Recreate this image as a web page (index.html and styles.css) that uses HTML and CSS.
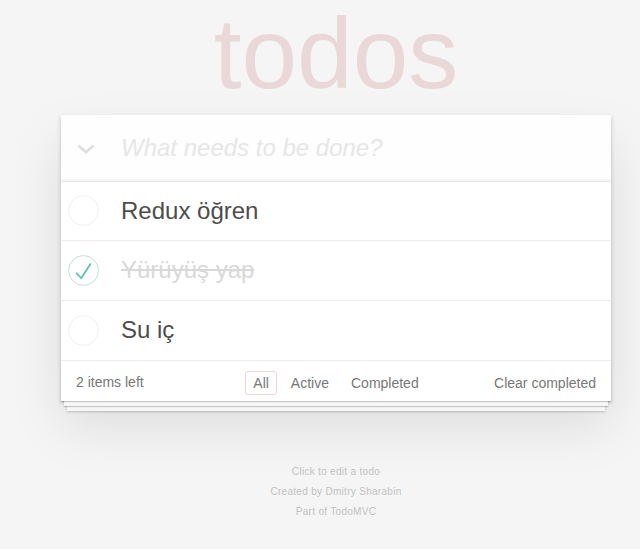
FILE: index.html
```html
<!DOCTYPE html>
<html lang="tr">
<head>
<meta charset="utf-8">
<title>Redux TodoMVC</title>
<link rel="stylesheet" href="styles.css">
</head>
<body>
<div class="page">
  <h1 class="title">todos</h1>
  <section class="todoapp">
    <header class="header">
      <span class="toggle-all">
        <svg width="18" height="10" viewBox="0 0 18 10"><polyline points="1.5,1.5 9,8.2 16.5,1.5" fill="none" stroke="#dedede" stroke-width="2.6"/></svg>
      </span>
      <input class="new-todo" type="text" placeholder="What needs to be done?">
    </header>
    <ul class="todo-list">
      <li class="todo">
        <svg class="toggle" width="31" height="31" viewBox="-2 -2 104 104"><circle cx="50" cy="50" r="50" fill="none" stroke="#ededed" stroke-width="3"/></svg>
        <label class="todo-label">Redux öğren</label>
      </li>
      <li class="todo completed">
        <svg class="toggle" width="31" height="31" viewBox="-2 -2 104 104"><circle cx="50" cy="50" r="50" fill="none" stroke="#bddad5" stroke-width="3"/><path fill="#5dc2af" d="M72 25L42 71 27 56l-4 4 20 20 34-52z"/></svg>
        <label class="todo-label">Yürüyüş yap</label>
      </li>
      <li class="todo">
        <svg class="toggle" width="31" height="31" viewBox="-2 -2 104 104"><circle cx="50" cy="50" r="50" fill="none" stroke="#ededed" stroke-width="3"/></svg>
        <label class="todo-label">Su iç</label>
      </li>
    </ul>
    <footer class="footer">
      <span class="todo-count">2 items left</span>
      <ul class="filters">
        <li><a class="filter selected">All</a></li>
        <li><a class="filter">Active</a></li>
        <li><a class="filter">Completed</a></li>
      </ul>
      <span class="clear-completed">Clear completed</span>
    </footer>
  </section>
  <footer class="info">
    <p>Click to edit a todo</p>
    <p>Created by Dmitry Sharabin</p>
    <p>Part of TodoMVC</p>
  </footer>
</div>
</body>
</html>
```

FILE: styles.css
```css
html, body {
  margin: 0;
  padding: 0;
}

body {
  background: #f5f5f5;
  color: #4d4d4d;
  font: 14px "Liberation Sans", Arial, sans-serif;
  line-height: 1.4em;
}

.page {
  width: 550px;
  margin-left: 61px;
}

.title {
  margin: 0;
  padding-top: 3px;
  height: 112px;
  font-size: 100px;
  line-height: 100px;
  font-weight: normal;
  text-align: center;
  color: rgba(175, 47, 47, 0.15);
}

.todoapp {
  background: #fff;
  margin: 0 0 40px 0;
  box-shadow: 0 2px 4px 0 rgba(0, 0, 0, 0.2), 0 25px 50px 0 rgba(0, 0, 0, 0.1);
}

.header {
  display: flex;
  align-items: center;
  background: rgba(0, 0, 0, 0.003);
  box-shadow: inset 0 -2px 1px rgba(0, 0, 0, 0.03);
}

.toggle-all {
  width: 60px;
  flex: none;
  box-sizing: border-box;
  padding: 3px 0 0 16px;
  display: flex;
}

.new-todo {
  flex: 1;
  min-width: 0;
  margin: 0;
  border: none;
  background: transparent;
  font: inherit;
  font-size: 24px;
  line-height: 1.4em;
  padding: 16px 16px 16px 0;
  color: inherit;
  outline: none;
}

.new-todo::placeholder {
  font-style: italic;
  color: #e6e6e6;
}

.todo-list {
  margin: 0;
  padding: 0;
  list-style: none;
  border-top: 1px solid #e6e6e6;
}

.todo {
  display: flex;
  align-items: center;
  font-size: 24px;
  border-bottom: 1px solid #ededed;
}

.toggle {
  flex: none;
  margin-left: 7px;
  display: block;
}

.todo-label {
  display: block;
  flex: 1;
  padding: 15px 15px 15px 22px;
  line-height: 1.2;
  color: #4d4d4d;
}

.completed .todo-label {
  color: #d9d9d9;
  text-decoration: line-through;
}

.footer {
  display: grid;
  grid-template-columns: 1fr auto 1fr;
  align-items: center;
  color: #777;
  padding: 10px 15px;
  height: 20px;
  box-shadow: 0 1px 1px rgba(0, 0, 0, 0.2),
              0 8px 0 -3px #f6f6f6,
              0 9px 1px -3px rgba(0, 0, 0, 0.2),
              0 16px 0 -6px #f6f6f6,
              0 17px 2px -6px rgba(0, 0, 0, 0.2);
}

.todo-count {
  text-align: left;
}

.filters {
  display: flex;
  gap: 6px;
  margin: 0;
  padding: 0;
  list-style: none;
}

.filter {
  display: block;
  padding: 1px 7px;
  line-height: 20px;
  border: 1px solid transparent;
  border-radius: 3px;
  color: inherit;
}

.filter.selected {
  border-color: rgba(175, 47, 47, 0.2);
}

.clear-completed {
  text-align: right;
  line-height: 20px;
}

.info {
  margin: 66px 0 0;
  color: #bfbfbf;
  font-size: 10px;
  letter-spacing: 0.3px;
  text-shadow: 0 1px 0 rgba(255, 255, 255, 0.5);
  text-align: center;
}

.info p {
  line-height: 1;
  margin: 10px 0;
}

.info p:first-child {
  margin-top: 0;
}
```
